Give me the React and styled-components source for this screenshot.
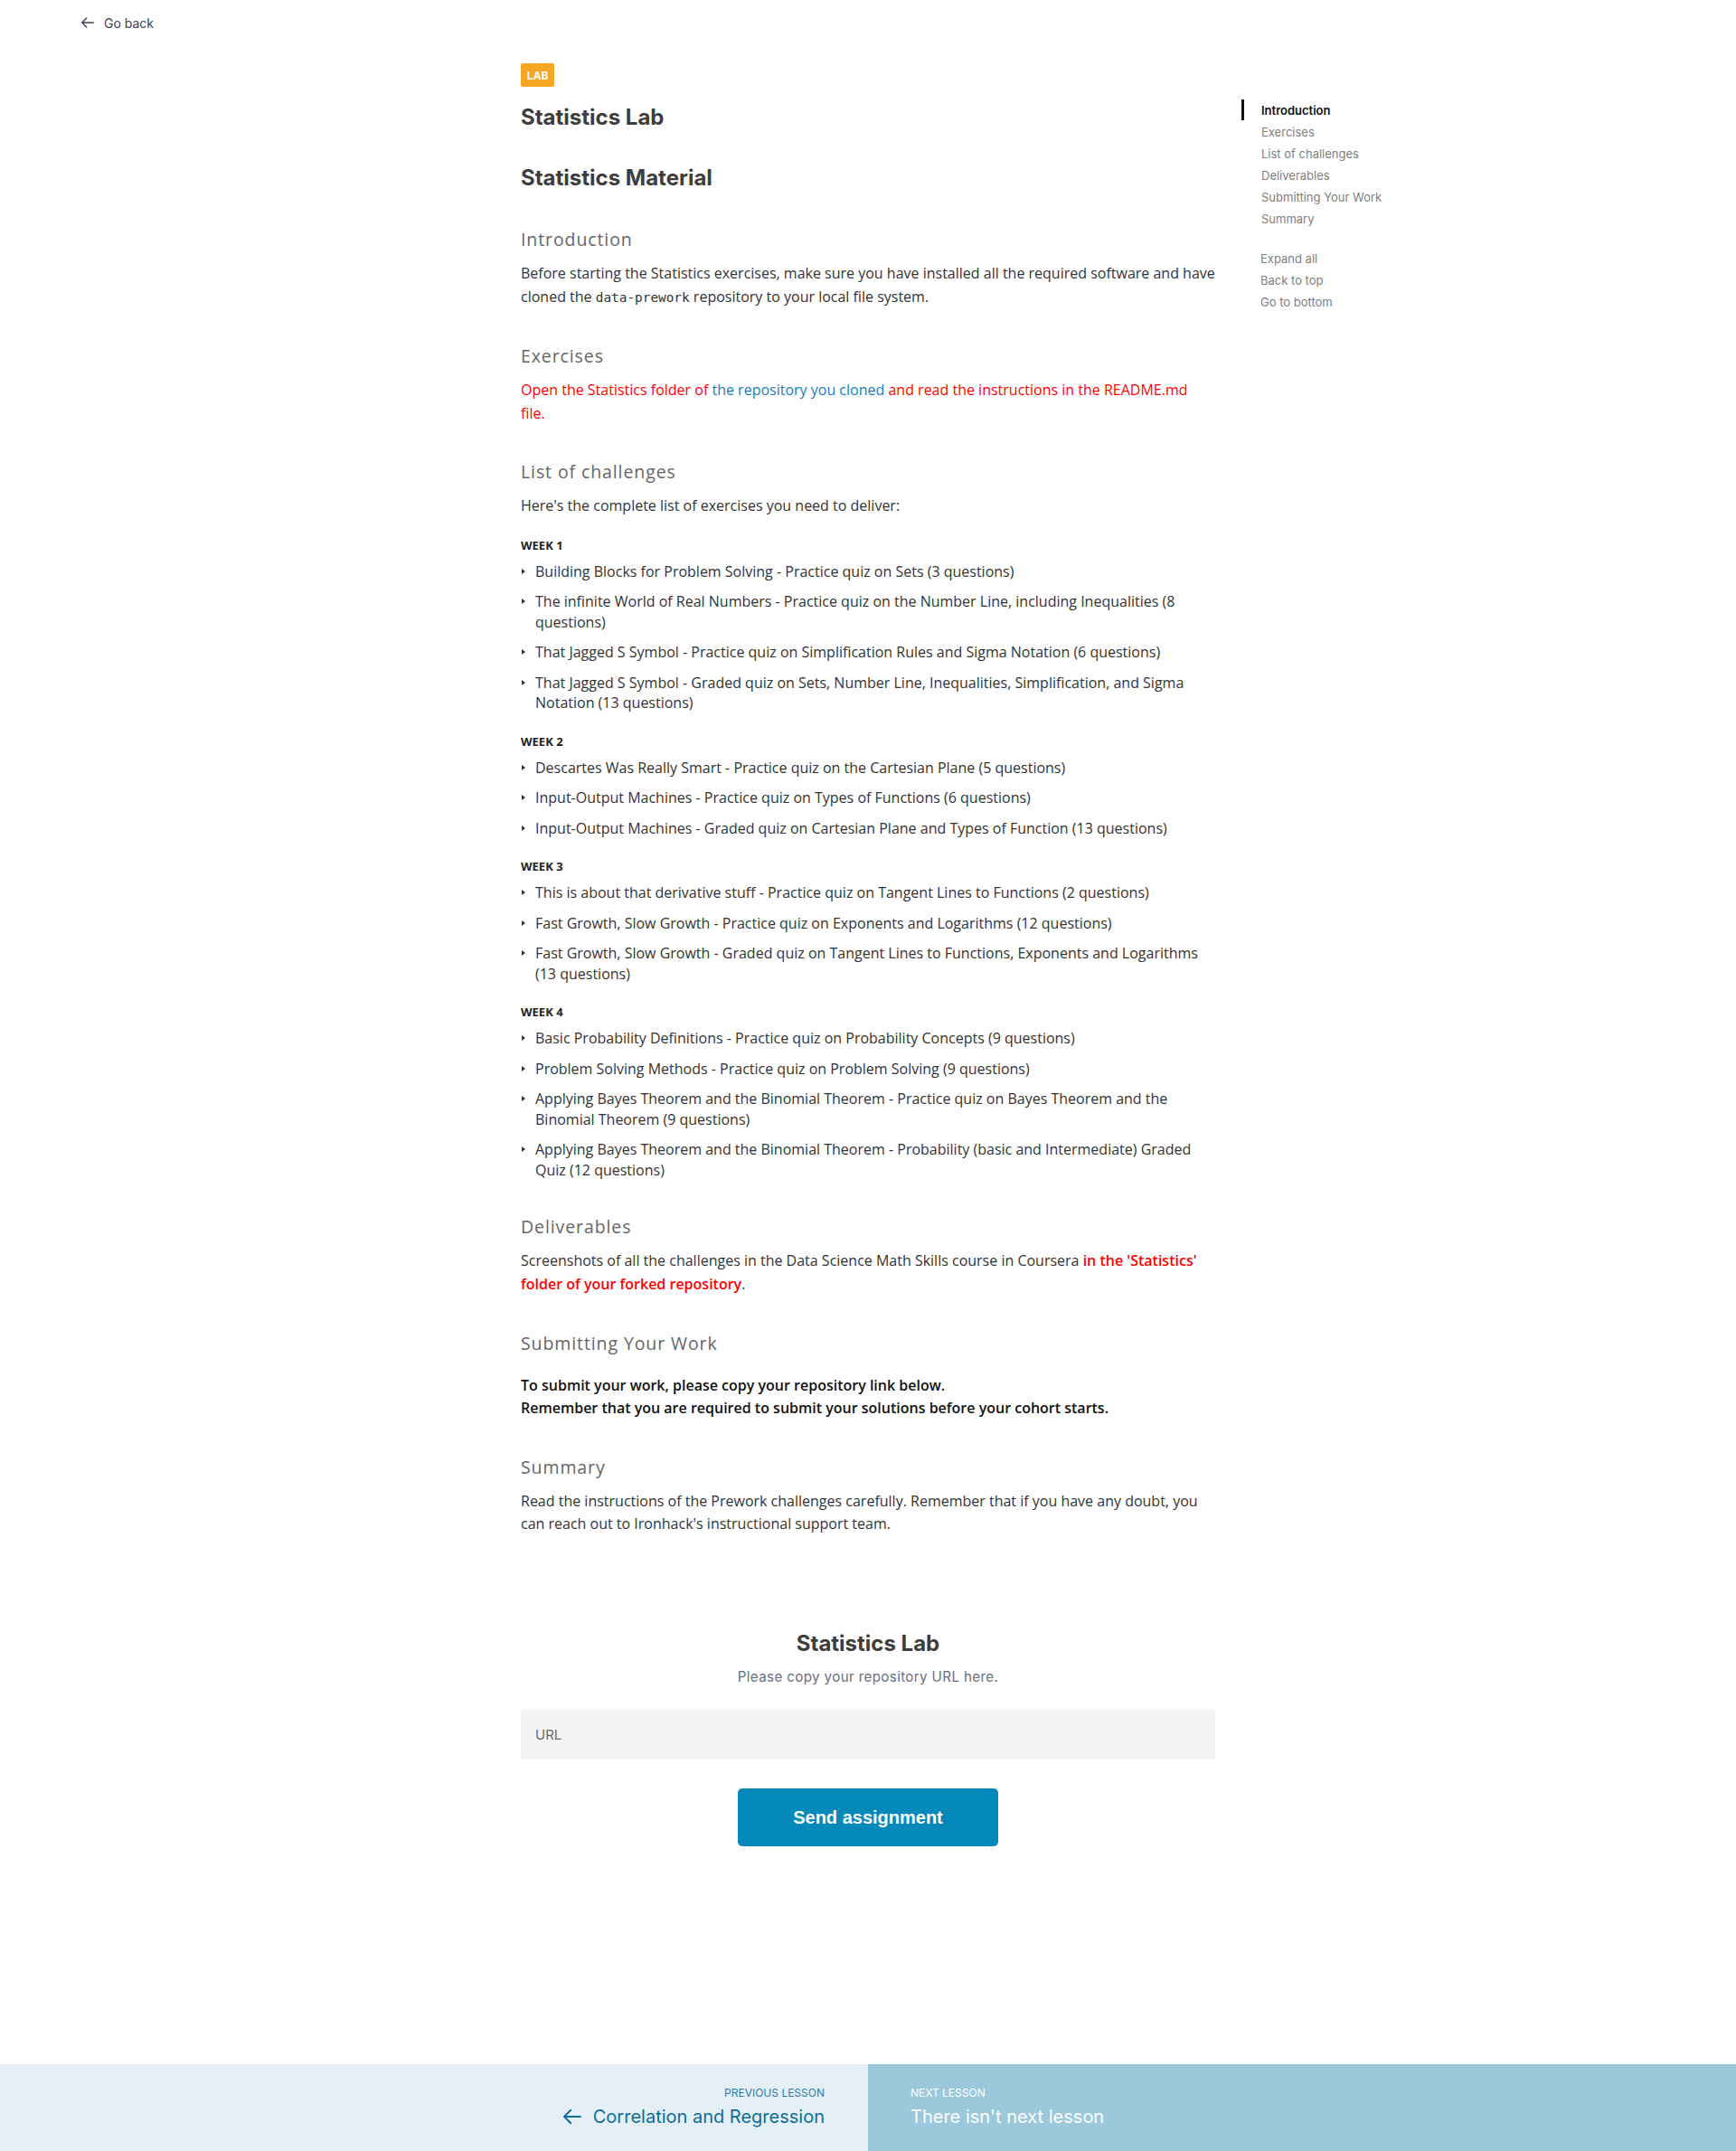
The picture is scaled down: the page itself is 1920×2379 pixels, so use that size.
import React from "react";
import styled, { createGlobalStyle } from "styled-components";

const Global = createGlobalStyle`
  html, body { margin: 0; padding: 0; background: #fff; }
  body { font-family: Inter, "Noto Sans", sans-serif; color: #333; }
  * { box-sizing: border-box; }
`;

const Page = styled.div`
  min-height: 100vh;
  display: flex;
  flex-direction: column;
`;

const TopBar = styled.div`
  height: 50px;
  display: flex;
  align-items: center;
  padding-left: 90px;
`;

const BackLink = styled.a`
  display: flex;
  align-items: center;
  gap: 11px;
  font-family: Inter, sans-serif;
  font-size: 14px;
  color: #3c4356;
  text-decoration: none;
`;

const Main = styled.main`
  flex: 1;
  display: flex;
  flex-direction: column;
  padding-bottom: 200px;
`;

const Layout = styled.div`
  display: grid;
  grid-template-columns: 1fr 768px 1fr;
  padding-top: 20px;
`;

const Article = styled.article`
  grid-column: 2;
  font-family: "Open Sans", sans-serif;
`;

const Badge = styled.span`
  display: inline-flex;
  align-items: center;
  justify-content: center;
  width: 37px;
  height: 26px;
  border-radius: 2px;
  background: #f5a623;
  color: #fff;
  font-family: Inter, sans-serif;
  font-weight: 700;
  font-size: 12px;
`;

const Title = styled.h1`
  margin: ${(p) => p.$mt || 18}px 0 0;
  font-family: Inter, sans-serif;
  font-weight: 700;
  font-size: 24px;
  line-height: 32px;
  color: #3d3d3d;
`;

const SectionTitle = styled.h3`
  margin: 38px 0 11px;
  font-family: "Open Sans", sans-serif;
  font-weight: 400;
  font-size: 19.5px;
  line-height: 28px;
  letter-spacing: 0.9px;
  color: #666;
`;

const Para = styled.p`
  margin: ${(p) => p.$mt || 0}px 0 0;
  font-size: 16px;
  line-height: 25.6px;
  color: ${(p) => (p.$red ? "#ff0000" : p.$dark ? "#111" : "#333")};
  font-weight: ${(p) => (p.$bold ? 600 : 400)};
`;

const Red = styled.strong`
  color: #ff0000;
  font-weight: 600;
`;

const Blue = styled.a`
  color: #1a7bb9;
  text-decoration: none;
`;

const Code = styled.code`
  font-family: "DejaVu Sans Mono", monospace;
  font-size: 14.4px;
  color: #333;
`;

const Week = styled.h4`
  margin: ${(p) => (p.$first ? 20 : 21)}px 0 8px;
  font-size: 13px;
  line-height: 20px;
  font-weight: 700;
  text-transform: uppercase;
  color: #222;
`;

const List = styled.ul`
  margin: 0;
  padding: 0;
  list-style: none;
  display: flex;
  flex-direction: column;
  gap: 11px;
`;

const Item = styled.li`
  position: relative;
  padding-left: 16px;
  font-size: 16px;
  line-height: 22.5px;
  color: #333;
  &::before {
    content: "";
    position: absolute;
    left: 1px;
    top: 8px;
    border-left: 4px solid #333;
    border-top: 3.5px solid transparent;
    border-bottom: 3.5px solid transparent;
  }
`;

const Aside = styled.aside`
  grid-column: 3;
  padding-left: 29px;
  padding-top: 40px;
`;

const TocList = styled.nav`
  display: flex;
  flex-direction: column;
`;

const TocItem = styled.a`
  display: block;
  position: relative;
  padding-left: ${(p) => (p.$tight ? 21 : 22)}px;
  font-family: Inter, sans-serif;
  font-size: 13px;
  line-height: 24px;
  color: ${(p) => (p.$active ? "#111" : "#808080")};
  font-weight: ${(p) => (p.$active ? 600 : 400)};
  text-decoration: none;
  ${(p) =>
    p.$active &&
    `&::before { content: ""; position: absolute; left: 0; top: 0; width: 3px; height: 23px; background: #111; }`}
`;

const TocGap = styled.div`
  height: 20px;
`;

const FormSection = styled.section`
  width: 768px;
  margin: 103px auto 0;
  display: flex;
  flex-direction: column;
  align-items: center;
`;

const FormTitle = styled.h2`
  margin: 0;
  font-family: Inter, sans-serif;
  font-size: 24px;
  line-height: 32px;
  font-weight: 700;
  color: #3d3d3d;
`;

const FormSub = styled.p`
  margin: 9px 0 0;
  font-family: Inter, sans-serif;
  font-size: 15.2px;
  line-height: 24px;
  letter-spacing: 0.35px;
  color: #6b6f7b;
`;

const Input = styled.input`
  margin-top: 24px;
  width: 100%;
  height: 55px;
  border: none;
  outline: none;
  background: #f3f4f6;
  padding: 0 16px;
  font-family: Inter, sans-serif;
  font-size: 15px;
  color: #333;
  &::placeholder { color: #6b6b6b; }
`;

const SendButton = styled.button`
  margin-top: 32px;
  width: 288px;
  height: 64px;
  border: none;
  border-radius: 5px;
  background: #0589ba;
  color: #fff;
  font-family: "Liberation Sans", Arial, sans-serif;
  font-weight: 700;
  font-size: 20px;
  cursor: pointer;
`;

const Footer = styled.footer`
  display: grid;
  grid-template-columns: 1fr 1fr;
  height: 96px;
`;

const FooterHalf = styled.a`
  display: flex;
  flex-direction: column;
  align-items: ${(p) => (p.$next ? "flex-start" : "flex-end")};
  padding: 24px ${(p) => (p.$next ? 0 : 48)}px 0 ${(p) => (p.$next ? 47 : 0)}px;
  background: ${(p) => (p.$next ? "#9bc8db" : "#e5f0f6")};
  color: ${(p) => (p.$next ? "#fff" : "#0b6e9c")};
  text-decoration: none;
  font-family: Inter, sans-serif;
`;

const FooterLabel = styled.span`
  font-size: 12px;
  line-height: 16px;
  text-transform: uppercase;
  color: ${(p) => (p.$next ? "#fff" : "#2a7ca6")};
`;

const FooterTitle = styled.span`
  margin-top: 4px;
  display: flex;
  align-items: center;
  gap: 13px;
  font-size: 20px;
  line-height: 28px;
`;

const ArrowLeft = ({ size = 14, color = "currentColor", width = 1.6 }) => (
  <svg width={size} height={size} viewBox="0 0 16 16" fill="none">
    <path d="M15.2 8H0.8M6.6 2.2L0.8 8L6.6 13.8" stroke={color} strokeWidth={width} strokeLinecap="round" strokeLinejoin="round" />
  </svg>
);

const weeks = [
  {
    name: "Week 1",
    items: [
      "Building Blocks for Problem Solving - Practice quiz on Sets (3 questions)",
      "The infinite World of Real Numbers - Practice quiz on the Number Line, including Inequalities (8 questions)",
      "That Jagged S Symbol - Practice quiz on Simplification Rules and Sigma Notation (6 questions)",
      "That Jagged S Symbol - Graded quiz on Sets, Number Line, Inequalities, Simplification, and Sigma Notation (13 questions)",
    ],
  },
  {
    name: "Week 2",
    items: [
      "Descartes Was Really Smart - Practice quiz on the Cartesian Plane (5 questions)",
      "Input-Output Machines - Practice quiz on Types of Functions (6 questions)",
      "Input-Output Machines - Graded quiz on Cartesian Plane and Types of Function (13 questions)",
    ],
  },
  {
    name: "Week 3",
    items: [
      "This is about that derivative stuff - Practice quiz on Tangent Lines to Functions (2 questions)",
      "Fast Growth, Slow Growth - Practice quiz on Exponents and Logarithms (12 questions)",
      "Fast Growth, Slow Growth - Graded quiz on Tangent Lines to Functions, Exponents and Logarithms (13 questions)",
    ],
  },
  {
    name: "Week 4",
    items: [
      "Basic Probability Definitions - Practice quiz on Probability Concepts (9 questions)",
      "Problem Solving Methods - Practice quiz on Problem Solving (9 questions)",
      "Applying Bayes Theorem and the Binomial Theorem - Practice quiz on Bayes Theorem and the Binomial Theorem (9 questions)",
      "Applying Bayes Theorem and the Binomial Theorem - Probability (basic and Intermediate) Graded Quiz (12 questions)",
    ],
  },
];

const toc = ["Introduction", "Exercises", "List of challenges", "Deliverables", "Submitting Your Work", "Summary"];

export default function App() {
  return (
    <Page>
      <Global />
      <TopBar>
        <BackLink href="#">
          <ArrowLeft size={14} color="#3c4356" />
          Go back
        </BackLink>
      </TopBar>
      <Main>
        <Layout>
          <Article>
            <Badge>LAB</Badge>
            <Title>Statistics Lab</Title>
            <Title $mt={35}>Statistics Material</Title>

            <SectionTitle>Introduction</SectionTitle>
            <Para>
              Before starting the Statistics exercises, make sure you have installed all the required software and have
              cloned the <Code>data-prework</Code> repository to your local file system.
            </Para>

            <SectionTitle>Exercises</SectionTitle>
            <Para $red>
              Open the Statistics folder of <Blue href="#">the repository you cloned</Blue> and read the instructions in
              the README.md file.
            </Para>

            <SectionTitle>List of challenges</SectionTitle>
            <Para>Here's the complete list of exercises you need to deliver:</Para>
            {weeks.map((w, i) => (
              <React.Fragment key={w.name}>
                <Week $first={i === 0}>{w.name}</Week>
                <List>
                  {w.items.map((it) => (
                    <Item key={it}>{it}</Item>
                  ))}
                </List>
              </React.Fragment>
            ))}

            <SectionTitle>Deliverables</SectionTitle>
            <Para>
              Screenshots of all the challenges in the Data Science Math Skills course in Coursera{" "}
              <Red>in the 'Statistics' folder of your forked repository</Red>.
            </Para>

            <SectionTitle>Submitting Your Work</SectionTitle>
            <Para $bold $dark $mt={20}>
              To submit your work, please copy your repository link below.
              <br />
              Remember that you are required to submit your solutions before your cohort starts.
            </Para>

            <SectionTitle>Summary</SectionTitle>
            <Para>
              Read the instructions of the Prework challenges carefully. Remember that if you have any doubt, you can
              reach out to Ironhack's instructional support team.
            </Para>
          </Article>
          <Aside>
            <TocList>
              {toc.map((t, i) => (
                <TocItem key={t} href="#" $active={i === 0}>
                  {t}
                </TocItem>
              ))}
              <TocGap />
              <TocItem href="#" $tight>Expand all</TocItem>
              <TocItem href="#" $tight>Back to top</TocItem>
              <TocItem href="#" $tight>Go to bottom</TocItem>
            </TocList>
          </Aside>
        </Layout>

        <FormSection>
          <FormTitle>Statistics Lab</FormTitle>
          <FormSub>Please copy your repository URL here.</FormSub>
          <Input placeholder="URL" />
          <SendButton>Send assignment</SendButton>
        </FormSection>
      </Main>
      <Footer>
        <FooterHalf href="#">
          <FooterLabel>Previous lesson</FooterLabel>
          <FooterTitle>
            <ArrowLeft size={20} color="#0b6e9c" width={1.5} />
            Correlation and Regression
          </FooterTitle>
        </FooterHalf>
        <FooterHalf $next>
          <FooterLabel $next>Next lesson</FooterLabel>
          <FooterTitle>There isn't next lesson</FooterTitle>
        </FooterHalf>
      </Footer>
    </Page>
  );
}
